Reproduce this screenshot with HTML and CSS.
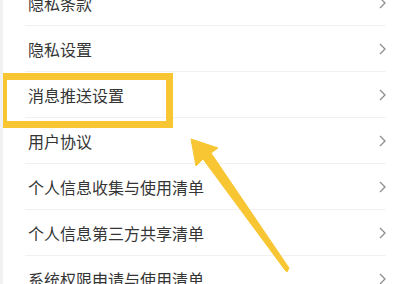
FILE: index.html
```html
<!DOCTYPE html>
<html lang="zh-CN">
<head>
    <meta charset="UTF-8">
    <meta name="viewport" content="width=device-width, initial-scale=1.0">
    <title>设置</title>
    <link rel="stylesheet" href="styles.css">
</head>
<body>
    <div class="page">
        <ul class="menu">
            <li class="item"><span>隐私条款</span><svg class="chevron" viewBox="0 0 7 12"><polyline points="1,1 6,6 1,11"/></svg></li>
            <li class="item"><span>隐私设置</span><svg class="chevron" viewBox="0 0 7 12"><polyline points="1,1 6,6 1,11"/></svg></li>
            <li class="item"><span>消息推送设置</span><svg class="chevron" viewBox="0 0 7 12"><polyline points="1,1 6,6 1,11"/></svg></li>
            <li class="item"><span>用户协议</span><svg class="chevron" viewBox="0 0 7 12"><polyline points="1,1 6,6 1,11"/></svg></li>
            <li class="item"><span>个人信息收集与使用清单</span><svg class="chevron" viewBox="0 0 7 12"><polyline points="1,1 6,6 1,11"/></svg></li>
            <li class="item"><span>个人信息第三方共享清单</span><svg class="chevron" viewBox="0 0 7 12"><polyline points="1,1 6,6 1,11"/></svg></li>
            <li class="item"><span>系统权限申请与使用清单</span><svg class="chevron" viewBox="0 0 7 12"><polyline points="1,1 6,6 1,11"/></svg></li>
        </ul>

        <!-- highlight annotation -->
        <div class="highlight"></div>
        <svg class="arrow" viewBox="0 0 400 284">
            <polygon points="191,139 218,148 211,153 289,268 287,272 285,270 203,159 196,166"/>
        </svg>
    </div>
</body>
</html>
```

FILE: styles.css
```css
body {
    margin: 0;
    padding: 0;
    background-color: #ffffff;
    font-family: "Noto Sans CJK SC", "Noto Sans", sans-serif;
    overflow: hidden;
}
.page {
    position: relative;
    height: 284px;
    overflow: hidden;
    border-left: 3px solid #f1f1f3;
}
.menu {
    list-style: none;
    margin: -20px 0 0 0;
    padding: 0;
}
.item {
    display: flex;
    align-items: center;
    justify-content: space-between;
    height: 45px;
    margin-left: 22px;
    margin-right: 14px;
    padding-left: 3px;
    border-bottom: 1px solid #f1f1f1;
    font-size: 16px;
    color: #353535;
}
.chevron {
    width: 7px;
    height: 12px;
    margin-right: 0;
}
.chevron polyline {
    fill: none;
    stroke: #8e8e8e;
    stroke-width: 1.3;
}
.highlight {
    position: absolute;
    left: -3px;
    top: 73px;
    width: 159px;
    height: 41px;
    border: 7px solid #f7c632;
}
.arrow {
    position: absolute;
    left: -3px;
    top: 0;
    width: 400px;
    height: 284px;
}
.arrow polygon {
    fill: #f7c632;
    stroke: #f7c632;
    stroke-width: 1;
    stroke-linejoin: round;
}
```
